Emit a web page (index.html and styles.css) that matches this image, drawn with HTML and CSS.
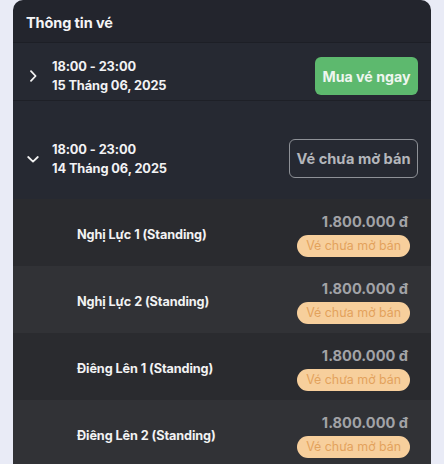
FILE: index.html
```html
<!DOCTYPE html>
<html lang="vi">
<head>
    <meta charset="UTF-8">
    <meta name="viewport" content="width=device-width, initial-scale=1.0">
    <title>Thông tin vé</title>
    <link rel="stylesheet" href="styles.css">
</head>
<body>
    <div class="ticket-card">
        <div class="ticket-header">Thông tin vé</div>

        <!-- Session 1 (collapsed) -->
        <div class="session session-closed">
            <svg class="chevron" width="12" height="12" viewBox="0 0 12 12">
                <path d="M4 1.2 L8.6 6 L4 10.8" fill="none" stroke="#f2f2f2" stroke-width="1.8" stroke-linecap="round" stroke-linejoin="round"/>
            </svg>
            <div class="session-time">
                <div>18:00 - 23:00</div>
                <div>15 Tháng 06, 2025</div>
            </div>
            <button class="btn btn-buy">Mua vé ngay</button>
        </div>

        <!-- Session 2 (expanded) -->
        <div class="session session-open">
            <svg class="chevron" width="12" height="12" viewBox="0 0 12 12">
                <path d="M1.2 4 L6 8.6 L10.8 4" fill="none" stroke="#f2f2f2" stroke-width="1.8" stroke-linecap="round" stroke-linejoin="round"/>
            </svg>
            <div class="session-time">
                <div>18:00 - 23:00</div>
                <div>14 Tháng 06, 2025</div>
            </div>
            <button class="btn btn-closed">Vé chưa mở bán</button>
        </div>

        <div class="ticket-list">
            <div class="ticket-row">
                <div class="ticket-name">Nghị Lực 1 (Standing)</div>
                <div class="ticket-info">
                    <div class="ticket-price">1.800.000 đ</div>
                    <span class="badge">Vé chưa mở bán</span>
                </div>
            </div>
            <div class="ticket-row">
                <div class="ticket-name">Nghị Lực 2 (Standing)</div>
                <div class="ticket-info">
                    <div class="ticket-price">1.800.000 đ</div>
                    <span class="badge">Vé chưa mở bán</span>
                </div>
            </div>
            <div class="ticket-row">
                <div class="ticket-name">Điêng Lên 1 (Standing)</div>
                <div class="ticket-info">
                    <div class="ticket-price">1.800.000 đ</div>
                    <span class="badge">Vé chưa mở bán</span>
                </div>
            </div>
            <div class="ticket-row">
                <div class="ticket-name">Điêng Lên 2 (Standing)</div>
                <div class="ticket-info">
                    <div class="ticket-price">1.800.000 đ</div>
                    <span class="badge">Vé chưa mở bán</span>
                </div>
            </div>
        </div>
    </div>
</body>
</html>
```

FILE: styles.css
```css
/* General Styling */
body {
    font-family: Inter, "Noto Sans", Arial, sans-serif;
    margin: 0;
    padding: 0;
    background-color: #e9ebf6;
    height: 464px;
    overflow: hidden;
}

.ticket-card {
    margin: 0 13px;
    background-color: #23252d;
    border-radius: 10px 10px 0 0;
    overflow: hidden;
}

.ticket-header {
    height: 42px;
    line-height: 45px;
    padding-left: 13px;
    font-size: 14.5px;
    font-weight: 700;
    letter-spacing: -0.1px;
    color: #f4f4f6;
    border-bottom: 1px solid #1d1f26;
}

/* Session rows */
.session {
    display: flex;
    align-items: center;
    padding: 0 13px 0 14px;
    background-color: #262932;
}

.session-closed {
    padding-top: 14px;
    padding-bottom: 5px;
    border-bottom: 1px solid #1e2027;
}

.session-open {
    padding-top: 38px;
    padding-bottom: 21px;
}

.chevron {
    flex-shrink: 0;
    margin-right: 13px;
}

.session-time {
    flex: 1;
    font-size: 12.8px;
    font-weight: 700;
    line-height: 19px;
    letter-spacing: -0.1px;
    color: #f2f2f4;
}

.btn {
    font-family: inherit;
    font-weight: 700;
    border-radius: 6px;
    cursor: pointer;
}

.btn-buy {
    width: 103px;
    height: 38px;
    padding: 0;
    border: none;
    font-size: 14.2px;
    background-color: #5db96e;
    color: #eef6ef;
}

.btn-closed {
    width: 129px;
    height: 39px;
    padding: 0;
    border: 1px solid #8e9197;
    font-size: 14.6px;
    background-color: transparent;
    color: #b4b6bb;
}

/* Ticket list */
.ticket-row {
    display: flex;
    align-items: center;
    justify-content: space-between;
    height: 67px;
    padding: 0 21px 0 64px;
    background-color: #2a2b2f;
}

.ticket-row:nth-child(even) {
    background-color: #313236;
}

.ticket-name {
    font-size: 12.7px;
    font-weight: 700;
    letter-spacing: -0.1px;
    color: #f2f2f3;
    padding-top: 3px;
}

.ticket-info {
    display: flex;
    flex-direction: column;
    align-items: flex-end;
    gap: 4px;
    padding-top: 4px;
}

.ticket-price {
    font-size: 14.6px;
    font-weight: 700;
    color: #a2a3a7;
    margin-right: 2px;
}

.badge {
    height: 22px;
    line-height: 22px;
    padding: 0 9px;
    font-size: 12.4px;
    color: #e3a25c;
    background-color: #f7cf9c;
    border-radius: 11px;
}
```
